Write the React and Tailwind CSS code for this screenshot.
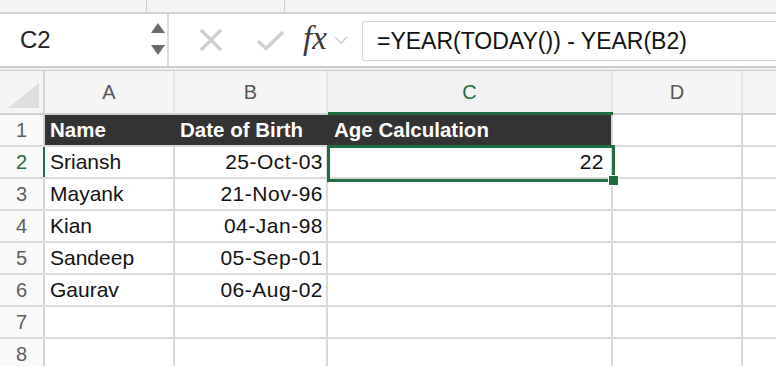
import React from 'react';

const FONT = { fontFamily: '"Liberation Sans", Arial, sans-serif' };

const cols = [
  { key: 'A', w: 'w-[130px]' },
  { key: 'B', w: 'w-[153px]' },
  { key: 'C', w: 'w-[285px]' },
  { key: 'D', w: 'w-[130px]' },
];

const people = [
  ['Sriansh', '25-Oct-03', '22'],
  ['Mayank', '21-Nov-96', ''],
  ['Kian', '04-Jan-98', ''],
  ['Sandeep', '05-Sep-01', ''],
  ['Gaurav', '06-Aug-02', ''],
  ['', '', ''],
  ['', '', ''],
];

function FormulaBar() {
  return (
    <div className="flex h-[52px] bg-white">
      <div className="w-[169px] h-full border-r-2 border-[#dcdcdc] flex items-center justify-between pl-[20px] pr-[2px]">
        <span className="text-[24px] text-[#222]">C2</span>
        <svg width="14" height="34" viewBox="0 0 14 34">
          <polygon points="7,0 14,10 0,10" fill="#6b6b6b" />
          <polygon points="0,22 14,22 7,32" fill="#6b6b6b" />
        </svg>
      </div>
      <div className="flex items-center w-[193px] h-full">
        <svg className="ml-[31px]" width="22" height="22" viewBox="0 0 22 22">
          <path d="M2 2 L20 20 M20 2 L2 20" stroke="#cfcfcf" strokeWidth="3.4" strokeLinecap="square" />
        </svg>
        <svg className="ml-[34px]" width="29" height="21" viewBox="0 0 29 21">
          <path d="M2 11 L10 18.5 L27 2" stroke="#cfcfcf" strokeWidth="3.6" fill="none" />
        </svg>
        <span
          className="ml-[18px] text-[33px] italic text-[#3a3a3a] leading-none -mt-[4px]"
          style={{ fontFamily: '"Liberation Serif", "Times New Roman", serif' }}
        >
          fx
        </span>
        <svg className="ml-[7px]" width="14" height="9" viewBox="0 0 14 9">
          <path d="M1 1 L7 7 L13 1" stroke="#cfcfcf" strokeWidth="1.6" fill="none" />
        </svg>
      </div>
      <div className="flex-1 mt-[7px] h-[40px] border border-[#d4d4d4] border-r-0 rounded-l-[3px] flex items-center pl-[14px]">
        <span className="text-[23px] text-[#111]">=YEAR(TODAY()) - YEAR(B2)</span>
      </div>
    </div>
  );
}

function ColumnHeaders() {
  return (
    <div className="flex h-[44px] bg-[#f5f5f5] border-b-2 border-[#d0d0d0]">
      <div className="w-[45px] h-full border-r-2 border-[#d4d4d4] flex items-end justify-end pr-[4px] pb-[5px]">
        <svg width="31" height="25" viewBox="0 0 31 25">
          <polygon points="31,0 31,25 0,25" fill="#dedede" />
        </svg>
      </div>
      {cols.map((c) => (
        <div
          key={c.key}
          className={`${c.w} h-full border-r-2 flex items-center justify-center text-[20px] ${
            c.key === 'C'
              ? 'border-[#e4e4e4] text-[#1e6e42] bg-[#f1f1f1] relative'
              : 'border-[#e4e4e4] text-[#555]'
          }`}
        >
          {c.key}
          {c.key === 'C' && <div className="absolute left-0 right-[-2px] bottom-[-2px] h-[3px] bg-[#1e6e42]" />}
        </div>
      ))}
      <div className="flex-1 h-full" />
    </div>
  );
}

function RowHeader({ n, active }) {
  return (
    <div
      className={`w-[45px] h-full border-r-2 flex items-center justify-center text-[20px] bg-[#fafafa] ${
        active ? 'border-[#1e6e42] text-[#1e6e42]' : 'border-[#d4d4d4] text-[#5e5e5e]'
      }`}
    >
      {n}
    </div>
  );
}

export default function App() {
  return (
    <div className="w-[776px] h-[366px] overflow-hidden bg-white relative" style={FONT}>
      {/* top ribbon strip */}
      <div className="flex h-[14px] bg-[#f4f4f4] border-b-2 border-[#d2d2d2]">
        <div className="w-[147px] border-r border-[#cccccc]" />
        <div className="w-[138px] border-r border-[#cccccc]" />
      </div>

      <FormulaBar />

      <div className="h-[5px] border-t-2 border-b border-[#cccccc] bg-[#efefef]" />

      <ColumnHeaders />

      {/* row 1 headers */}
      <div className="flex h-[32px] border-b-2 border-[#d9d9d9]">
        <RowHeader n={1} />
        <div className="w-[130px] h-full bg-[#333333] flex items-center pl-[5px] text-[20.5px] font-bold text-white">Name</div>
        <div className="w-[153px] h-full bg-[#333333] flex items-center pl-[5px] text-[20.5px] font-bold text-white">Date of Birth</div>
        <div className="w-[285px] h-full bg-[#333333] flex items-center pl-[6px] text-[20.5px] font-bold text-white border-r-2 border-[#d9d9d9]">
          Age Calculation
        </div>
        <div className="w-[130px] h-full border-r-2 border-[#d9d9d9]" />
        <div className="flex-1" />
      </div>

      {people.map((p, i) => (
        <div key={i} className="flex h-[32px] border-b-2 border-[#d9d9d9]">
          <RowHeader n={i + 2} active={i === 0} />
          <div className="w-[130px] h-full border-r-2 border-[#d9d9d9] flex items-center pl-[5px] text-[21px] text-[#111]">
            {p[0]}
          </div>
          <div className="w-[153px] h-full border-r-2 border-[#d9d9d9] flex items-center justify-end pr-[3px] text-[21px] tracking-[0.5px] text-[#111]">
            {p[1]}
          </div>
          <div className="w-[285px] h-full border-r-2 border-[#d9d9d9] flex items-center justify-end pr-[7px] text-[21px] tracking-[0.5px] text-[#111]">
            {p[2]}
          </div>
          <div className="w-[130px] h-full border-r-2 border-[#d9d9d9]" />
          <div className="flex-1" />
        </div>
      ))}

      {/* selected cell C2 */}
      <div className="absolute left-[327px] top-[145px] w-[288px] h-[37px] border-[3px] border-[#1e6e42] pointer-events-none" />
      <div className="absolute left-[608px] top-[175px] w-[9px] h-[9px] bg-[#1e6e42] border border-white box-content" />
    </div>
  );
}
